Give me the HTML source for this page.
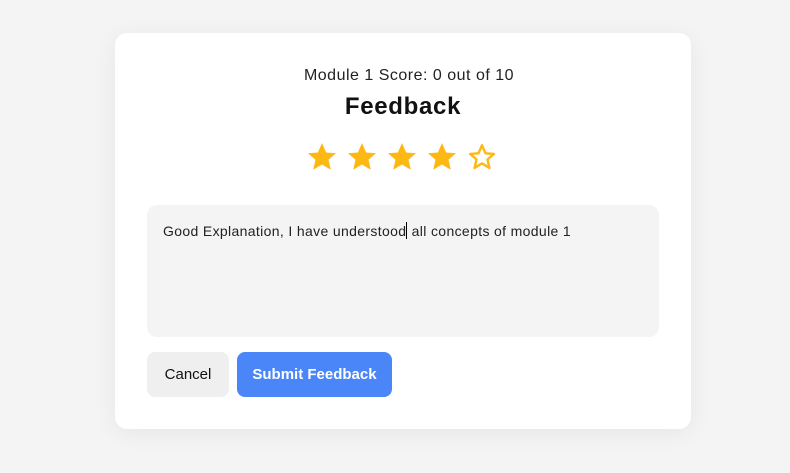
<!DOCTYPE html>
<html><head><style>
body{margin:0;width:790px;height:473px;background:#f4f4f4;font-family:"Liberation Sans",sans-serif;position:relative;overflow:hidden}
.card{position:absolute;left:115px;top:33px;width:576px;height:396px;background:#fff;border-radius:12px;box-shadow:0 4px 24px rgba(0,0,0,0.06)}
.t1{position:absolute;top:67px;left:14px;width:790px;text-align:center;font-size:16px;letter-spacing:0.5px;color:#222}
.t2{position:absolute;top:93px;left:8px;width:790px;text-align:center;font-size:24px;letter-spacing:0.7px;font-weight:bold;color:#111}
.star{position:absolute;top:141px;width:32px;height:32px}
.ta{position:absolute;left:147px;top:205px;width:512px;height:132px;background:#f4f4f4;border-radius:10px}
.ta span{position:absolute;left:16px;top:17px;font-size:14px;color:#222;letter-spacing:0.35px;white-space:nowrap}
.caret{display:inline-block;width:1px;height:17px;background:#000;vertical-align:-3px}
.btn{position:absolute;top:352px;height:45px;border-radius:8px;font-size:15px;line-height:45px;text-align:center}
</style></head><body>
<div class="card"></div>
<div class="t1">Module 1 Score: 0 out of 10</div>
<div class="t2">Feedback</div>
<svg class="star" style="left:306px" viewBox="0 0 24 24"><path d="M12 1.5l3.1 7.1 7.4.6-5.6 4.9 1.7 7.5L12 17.6l-6.6 4 1.7-7.5L1.5 9.2l7.4-.6z" fill="#fdb813"/></svg>
<svg class="star" style="left:346px" viewBox="0 0 24 24"><path d="M12 1.5l3.1 7.1 7.4.6-5.6 4.9 1.7 7.5L12 17.6l-6.6 4 1.7-7.5L1.5 9.2l7.4-.6z" fill="#fdb813"/></svg>
<svg class="star" style="left:386px" viewBox="0 0 24 24"><path d="M12 1.5l3.1 7.1 7.4.6-5.6 4.9 1.7 7.5L12 17.6l-6.6 4 1.7-7.5L1.5 9.2l7.4-.6z" fill="#fdb813"/></svg>
<svg class="star" style="left:426px" viewBox="0 0 24 24"><path d="M12 1.5l3.1 7.1 7.4.6-5.6 4.9 1.7 7.5L12 17.6l-6.6 4 1.7-7.5L1.5 9.2l7.4-.6z" fill="#fdb813"/></svg>
<svg class="star" style="left:466px" viewBox="0 0 24 24"><path d="M12 3.2l2.6 6 6.3.5-4.8 4.2 1.5 6.3L12 16.8l-5.6 3.4 1.5-6.3L3.1 9.7l6.3-.5z" fill="none" stroke="#fdb813" stroke-width="1.8" stroke-linejoin="round"/></svg>
<div class="ta"><span>Good Explanation, I have understood<i class="caret"></i> all concepts of module 1</span></div>
<div class="btn" style="left:147px;width:82px;background:#efefef;color:#111">Cancel</div>
<div class="btn" style="left:237px;width:155px;background:#4a86f8;color:#fff;font-weight:bold">Submit Feedback</div>
</body></html>
